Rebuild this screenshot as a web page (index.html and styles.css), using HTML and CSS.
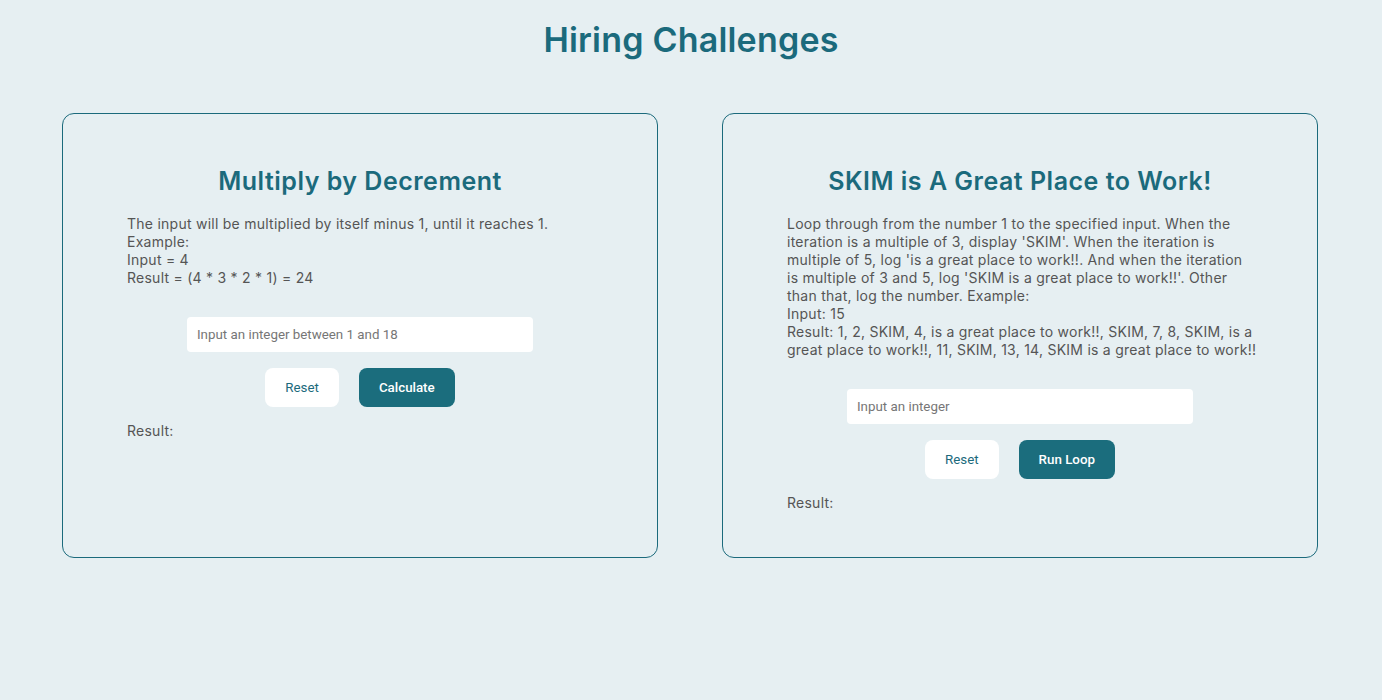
FILE: index.html
```html
<!DOCTYPE html>
<html lang="en">
<head>
<meta charset="utf-8">
<title>Hiring Challenges</title>
<link rel="stylesheet" href="styles.css">
</head>
<body>
<h1 class="page-title">Hiring Challenges</h1>
<main class="cards">
  <section class="card">
    <h2 class="card-title">Multiply by Decrement</h2>
    <p class="card-desc">The input will be multiplied by itself minus 1, until it reaches 1.<br>Example:<br>Input = 4<br>Result = (4 * 3 * 2 * 1) = 24</p>
    <input class="field" type="text" placeholder="Input an integer between 1 and 18">
    <div class="actions">
      <button class="btn btn-light">Reset</button>
      <button class="btn btn-primary">Calculate</button>
    </div>
    <p class="result">Result:</p>
  </section>
  <section class="card">
    <h2 class="card-title">SKIM is A Great Place to Work!</h2>
    <p class="card-desc">Loop through from the number 1 to the specified input. When the iteration is a multiple of 3, display 'SKIM'. When the iteration is multiple of 5, log 'is a great place to work!!. And when the iteration is multiple of 3 and 5, log 'SKIM is a great place to work!!'. Other than that, log the number. Example:<br>Input: 15<br><span class="nowrap">Result: 1, 2, SKIM, 4, is a great place to work!!, SKIM, 7, 8, SKIM, is a</span><br><span class="nowrap">great place to work!!, 11, SKIM, 13, 14, SKIM is a great place to work!!</span></p>
    <input class="field" type="text" placeholder="Input an integer">
    <div class="actions">
      <button class="btn btn-light">Reset</button>
      <button class="btn btn-primary">Run Loop</button>
    </div>
    <p class="result">Result:</p>
  </section>
</main>
</body>
</html>
```
FILE: styles.css
```css
* { box-sizing: border-box; }
html, body { margin: 0; padding: 0; }
body {
  background: #e6eff2;
  font-family: Inter, "DejaVu Sans", sans-serif;
  color: #555;
  min-height: 700px;
}
.page-title {
  margin: 19px 0 0;
  text-align: center;
  font-size: 34px;
  line-height: 42px;
  font-weight: 600;
  color: #1b6a7c;
  letter-spacing: 0.2px;
}
.cards {
  display: grid;
  grid-template-columns: repeat(2, minmax(0, 1fr));
  gap: 64px;
  padding: 0 64px 0 62px;
  margin-top: 52px;
}
.card {
  min-width: 0;
  border: 1px solid #1b6a7c;
  border-radius: 12px;
  padding: 52px 64px 45px;
  display: flex;
  flex-direction: column;
}
.card-title {
  margin: 0;
  text-align: center;
  font-size: 25px;
  line-height: 30px;
  font-weight: 600;
  color: #1b6a7c;
  letter-spacing: 0.5px;
}
.card-desc {
  margin: 19px 0 0;
  font-size: 14px;
  line-height: 18px;
  font-weight: 400;
  letter-spacing: 0.25px;
  color: #555;
}
.nowrap { white-space: nowrap; }
.field {
  align-self: center;
  width: 346px;
  height: 35px;
  margin-top: 30px;
  border: none;
  border-radius: 4px;
  background: #fff;
  padding: 0 10px;
  font-family: Roboto, "Liberation Sans", sans-serif;
  font-size: 13.333px;
  color: #333;
  outline: none;
}
.field::placeholder { color: #767676; }
.actions {
  display: flex;
  justify-content: center;
  gap: 20px;
  margin-top: 16px;
}
.btn {
  height: 39px;
  padding: 0 20px;
  border: none;
  border-radius: 8px;
  font-family: Roboto, "Liberation Sans", sans-serif;
  font-size: 13.333px;
  cursor: pointer;
}
.btn-light { background: #fff; color: #1b6a7c; }
.btn-primary { background: #1b6d7d; color: #fff; font-weight: 500; }
.result {
  margin: 15px 0 0;
  font-size: 14px;
  line-height: 18px;
  letter-spacing: 0.25px;
  color: #555;
}
```
